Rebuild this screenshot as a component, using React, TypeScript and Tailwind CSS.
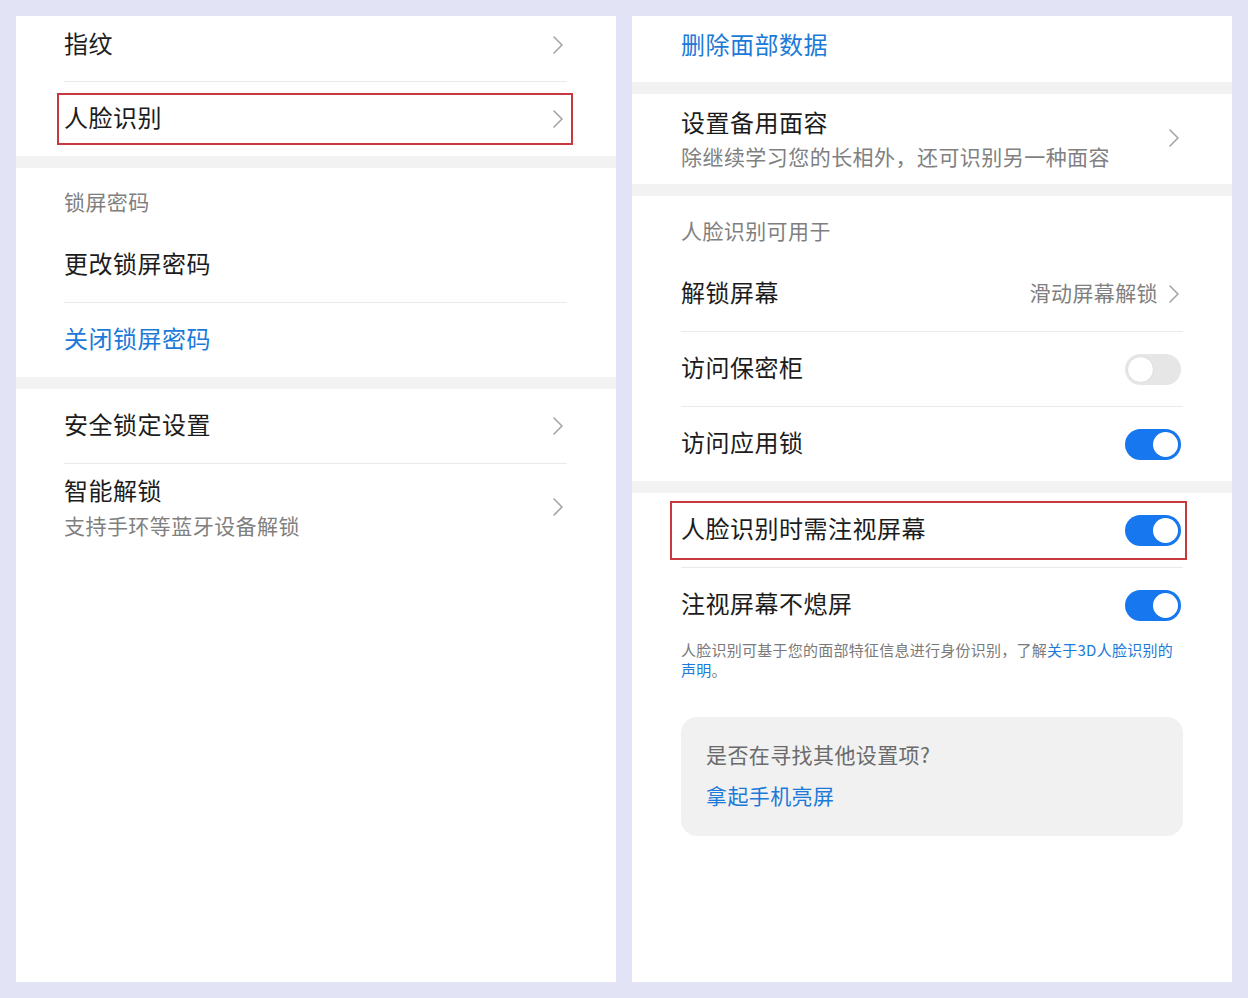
import type { ReactNode } from 'react';

const font = { fontFamily: '"Noto Sans CJK SC", "Noto Sans", sans-serif' };

function Chevron() {
  return (
    <svg width="12" height="20" viewBox="0 0 12 20" className="shrink-0 mr-[3px]">
      <polyline points="2,2 10,10 2,18" fill="none" stroke="#a3a3a3" strokeWidth="1.6" strokeLinecap="round" strokeLinejoin="round" />
    </svg>
  );
}

function Toggle({ on }: { on: boolean }) {
  if (on) {
    return (
      <div className="w-[56px] h-[31px] mr-[2px] rounded-full bg-[#1677ef] flex items-center justify-end pr-[3px] shrink-0">
        <div className="w-[25px] h-[25px] rounded-full bg-white" />
      </div>
    );
  }
  return (
    <div className="w-[56px] h-[31px] mr-[2px] rounded-full bg-[#e6e6e6] flex items-center pl-[2px] shrink-0">
      <div className="w-[27px] h-[27px] rounded-full bg-white border border-[#dcdcdc]" />
    </div>
  );
}

function Band() {
  return <div className="h-[12px] bg-[#f2f2f2]" />;
}

function Divider() {
  return <div className="h-px bg-[#e9e9e9]" />;
}

function Row({ children, right, className = 'h-[74px]' }: { children: ReactNode; right?: ReactNode; className?: string }) {
  return (
    <div className={`flex items-center justify-between ${className}`}>
      <div className="text-[24px] text-[#1c1c1c] leading-none tracking-[0.5px] pb-[4px]">{children}</div>
      {right}
    </div>
  );
}

function Boxed({ children, box }: { children: ReactNode; box: string }) {
  return (
    <div className="relative">
      {children}
      <div className={`absolute border-2 border-[#c8393f] pointer-events-none ${box}`} />
    </div>
  );
}

export default function App() {
  return (
    <div className="w-[1248px] h-[998px] bg-[#e3e3f6] p-[16px] flex gap-[16px]" style={font}>
      {/* left screen */}
      <div className="w-[600px] bg-white flex flex-col">
        <div className="px-[48px] pr-[49px]">
          <Row className="h-[65px] pb-[7px]" right={<Chevron />}>指纹</Row>
          <Divider />
          <Boxed box="-left-[7px] -right-[6px] top-[11px] bottom-[11px]">
            <Row right={<Chevron />}>人脸识别</Row>
          </Boxed>
        </div>
        <Band />
        <div className="px-[48px] pr-[49px]">
          <div className="h-[60px] pt-[6px] flex items-center text-[21px] text-[#7f7f7f] leading-none tracking-[0.4px]">锁屏密码</div>
          <Row>更改锁屏密码</Row>
          <Divider />
          <div className="h-[74px] pb-[4px] flex items-center text-[24px] text-[#1b7ad8] leading-none tracking-[0.5px]">关闭锁屏密码</div>
        </div>
        <Band />
        <div className="px-[48px] pr-[49px]">
          <Row right={<Chevron />}>安全锁定设置</Row>
          <Divider />
          <div className="flex items-center justify-between pt-[10px] pb-[14px]">
            <div className="flex flex-col">
              <div className="text-[24px] text-[#1c1c1c] leading-[32px] tracking-[0.5px]">智能解锁</div>
              <div className="text-[21px] text-[#808080] leading-[28px] mt-[5px] tracking-[0.45px]">支持手环等蓝牙设备解锁</div>
            </div>
            <Chevron />
          </div>
        </div>
      </div>

      {/* right screen */}
      <div className="w-[600px] bg-white flex flex-col">
        <div className="px-[49px]">
          <div className="h-[66px] pb-[11px] flex items-center text-[24px] text-[#1b7ad8] leading-none tracking-[0.5px]">删除面部数据</div>
        </div>
        <Band />
        <div className="px-[49px] h-[90px] pb-[3px] flex items-center justify-between">
          <div className="flex flex-col">
            <div className="text-[24px] text-[#1c1c1c] leading-[32px] tracking-[0.5px]">设置备用面容</div>
            <div className="text-[21px] text-[#808080] leading-[28px] mt-[4px] tracking-[0.45px]">除继续学习您的长相外，还可识别另一种面容</div>
          </div>
          <Chevron />
        </div>
        <Band />
        <div className="px-[49px]">
          <div className="h-[61px] pt-[7px] flex items-center text-[21px] text-[#7f7f7f] leading-none tracking-[0.4px]">人脸识别可用于</div>
          <Row
            right={
              <div className="flex items-center gap-[10px] text-[21px] text-[#808080] leading-none tracking-[0.4px]">
                <span className="pb-[3px]">滑动屏幕解锁</span>
                <Chevron />
              </div>
            }
          >
            解锁屏幕
          </Row>
          <Divider />
          <Row right={<Toggle on={false} />}>访问保密柜</Row>
          <Divider />
          <Row right={<Toggle on />}>访问应用锁</Row>
        </div>
        <Band />
        <div className="px-[49px]">
          <Boxed box="-left-[11px] -right-[4px] top-[8px] bottom-[7px]">
            <Row right={<Toggle on />}>人脸识别时需注视屏幕</Row>
          </Boxed>
          <Divider />
          <Row right={<Toggle on />}>注视屏幕不熄屏</Row>
          <p className="-mt-[2px] text-[15px] leading-[20px] text-[#7a7a7a] tracking-[0.25px]">
            <span className="whitespace-nowrap">
              人脸识别可基于您的面部特征信息进行身份识别，了解<span className="text-[#1b7ad8]">关于3D人脸识别的</span>
            </span>
            <br />
            <span className="text-[#1b7ad8]">声明</span>。
          </p>
          <div className="mt-[37px] h-[119px] rounded-[16px] bg-[#f1f1f1] px-[25px] pt-[23px] flex flex-col">
            <div className="text-[21px] leading-[28px] text-[#6b6b6b] tracking-[0.4px]">是否在寻找其他设置项?</div>
            <div className="text-[21px] leading-[28px] text-[#1b7ad8] mt-[13px] tracking-[0.4px]">拿起手机亮屏</div>
          </div>
        </div>
      </div>
    </div>
  );
}
